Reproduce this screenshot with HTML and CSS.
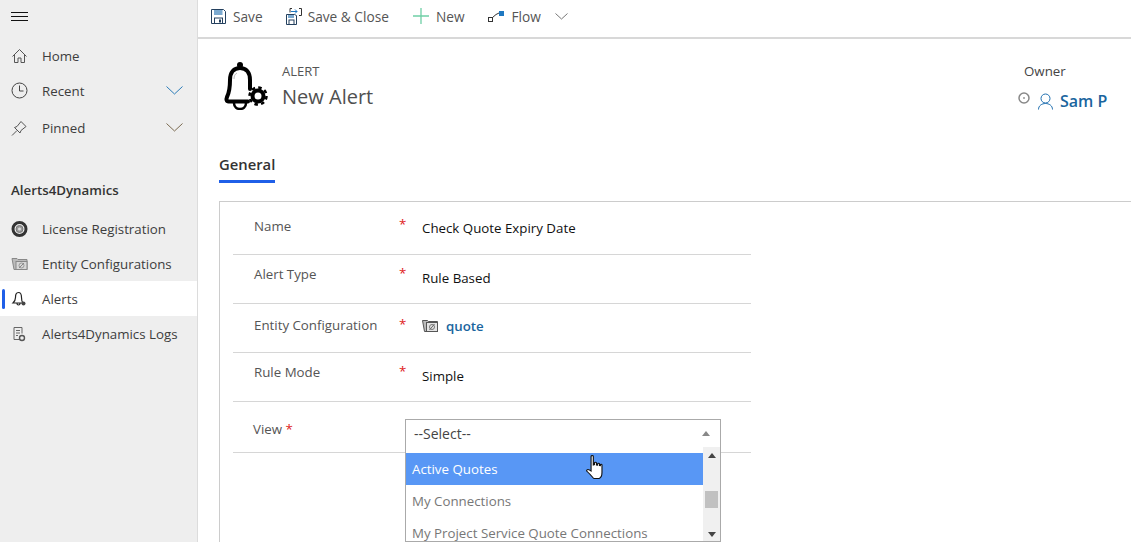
FILE: index.html
```html
<!DOCTYPE html>
<html lang="en">
<head>
    <meta charset="UTF-8">
    <meta name="viewport" content="width=device-width, initial-scale=1.0">
    <title>New Alert</title>
    <link rel="stylesheet" href="styles.css">
</head>
<body>
    <div class="app">
        <!-- Left navigation -->
        <nav class="sidebar">
            <div class="burger">
                <svg width="17" height="10" viewBox="0 0 17 10"><path d="M0 .5h17M0 4.500h17M0 8.500h17" stroke="#111" fill="none"/></svg>
            </div>
            <div class="nav-top">
                <div class="nav-row home-row">
                    <svg class="nav-icon" width="16" height="16" viewBox="0 0 16 16"><path d="M1 8.500 8 1.500l7 7M3 7v7.500h3.500V10h3v4.500H13V7" fill="none" stroke="#555" stroke-width="1"/></svg>
                    <span>Home</span>
                </div>
                <div class="nav-row recent-row">
                    <svg class="nav-icon" width="17" height="17" viewBox="0 0 17 17"><circle cx="8.500" cy="8.500" r="7.500" fill="none" stroke="#444" stroke-width="1"/><path d="M8.500 3.500v5.500H12.500" fill="none" stroke="#444" stroke-width="1"/></svg>
                    <span>Recent</span>
                    <svg class="nav-chevron" width="17" height="9" viewBox="0 0 17 9"><path d="M.5.500l8 7.500 8-7.500" fill="none" stroke="#2b7cb8" stroke-width="1"/></svg>
                </div>
                <div class="nav-row pinned-row">
                    <svg class="nav-icon" width="16" height="16" viewBox="0 0 16 16"><path d="M.5 15.500l5-5M3 7.500 5.500 6.500 9.500 1.500l5 5-5 4-1 2.500z" fill="none" stroke="#555" stroke-width="1"/></svg>
                    <span>Pinned</span>
                    <svg class="nav-chevron" width="17" height="9" viewBox="0 0 17 9"><path d="M.5.500l8 7.500 8-7.500" fill="none" stroke="#7a6a50" stroke-width="1"/></svg>
                </div>
            </div>
            <div class="nav-group">Alerts4Dynamics</div>
            <div class="nav-row">
                <svg class="nav-icon" width="16" height="16" viewBox="0 0 16 16"><circle cx="8" cy="8" r="6.500" fill="none" stroke="#333" stroke-width="3"/><circle cx="8" cy="8" r="3.500" fill="#999" stroke="#777" stroke-width="1"/><circle cx="8" cy="8" r="1.500" fill="#ddd"/></svg>
                <span>License Registration</span>
            </div>
            <div class="nav-row">
                <svg class="nav-icon" width="16" height="16" viewBox="0 0 16 16"><path d="M.5 2.500h5l1 1h9v10H2.500z" fill="#bbb" stroke="#888"/><rect x="4.500" y="5.500" width="11" height="8" fill="#d8d8d8" stroke="#888"/><circle cx="10" cy="9.500" r="2.500" fill="none" stroke="#999"/><path d="M7.500 12l5-5" stroke="#888"/></svg>
                <span>Entity Configurations</span>
            </div>
            <div class="nav-row active">
                <span class="active-bar"></span>
                <svg class="nav-icon" width="16" height="16" viewBox="0 0 16 16"><path d="M7 1.500C4.500 1.500 4 4 4 6.500c0 3-1 4-2.500 5.500h10C10 10.500 10 9 10 6.500 10 4 9.500 1.500 7 1.500zM5.500 12.500c0 2 3 2 3 0" fill="none" stroke="#222" stroke-width="1.200"/><circle cx="12" cy="12.500" r="2" fill="#444"/></svg>
                <span>Alerts</span>
            </div>
            <div class="nav-row">
                <svg class="nav-icon" width="16" height="16" viewBox="0 0 16 16"><path d="M8 13.500H2.500V1.500h8v6M4.500 4.500h4M4.500 7h4M4.500 9.500h2" fill="none" stroke="#666"/><circle cx="10.500" cy="12" r="2.500" fill="none" stroke="#555" stroke-width="1.400"/></svg>
                <span>Alerts4Dynamics Logs</span>
            </div>
        </nav>

        <main class="content">
            <!-- Command bar -->
            <div class="toolbar">
                <div class="tool tool-save">
                    <svg width="15" height="15" viewBox="0 0 15 15"><path d="M.5.500h12l2 2v12H.5z" fill="#fff" stroke="#24405e"/><rect x="3" y="1" width="8.500" height="5" fill="#7ba9cf"/><rect x="3.500" y="9" width="8" height="5.500" fill="#fff" stroke="#24405e"/><rect x="8" y="10.500" width="2" height="3" fill="#24405e"/></svg>
                    <span>Save</span>
                </div>
                <div class="tool tool-close">
                    <svg width="16" height="17" viewBox="0 0 16 17"><path d="M.5 6.500h8l2 1v9H.5z" fill="#fff" stroke="#24405e"/><rect x="2" y="7" width="6" height="3" fill="#7ba9cf"/><rect x="3" y="12" width="5" height="4.500" fill="#fff" stroke="#24405e"/><path d="M4 4.500V.5h2M13 .5h2.500v7H13" fill="none" stroke="#333"/><path d="M5 3.500h6M9 1.500l2 2-2 2" fill="none" stroke="#1f78c1"/></svg>
                    <span>Save &amp; Close</span>
                </div>
                <div class="tool tool-new">
                    <svg width="16" height="16" viewBox="0 0 16 16"><path d="M8 0v16M0 8h16" stroke="#6fcfa6" stroke-width="1.300" fill="none"/></svg>
                    <span>New</span>
                </div>
                <div class="tool tool-flow">
                    <svg width="16" height="11" viewBox="0 0 16 11"><rect x=".5" y="6.500" width="4" height="4" fill="#fff" stroke="#333"/><path d="M4.500 6.500 8 3.500 11 2" fill="none" stroke="#333"/><rect x="11" y="0" width="5" height="5" fill="#1f78c1"/></svg>
                    <span>Flow</span>
                </div>
                <svg class="tool-more" width="13" height="7" viewBox="0 0 13 7"><path d="M.5.500l6 5.500 6-5.500" fill="none" stroke="#777"/></svg>
            </div>

            <!-- Record header -->
            <header class="record-head">
                <svg class="record-icon" width="46" height="48" viewBox="0 0 46 48">
                    <circle cx="18" cy="3" r="3" fill="#000"/>
                    <path d="M28 27V18C28 10 24 6 18 6S8 10 8 18c0 9-.5 12-3 17-1 2.500-.5 4.500 1.500 4.500H26" fill="none" stroke="#000" stroke-width="4" stroke-linecap="round" stroke-linejoin="round"/>
                    <path d="M12 17c0-3 1-5 3-6" fill="none" stroke="#bbb" stroke-width="1"/>
                    <path d="M12 41c0 8 12 8 12 0" fill="none" stroke="#000" stroke-width="2.500"/>
                    <circle cx="36" cy="34" r="5.500" fill="#fff" stroke="#000" stroke-width="4"/>
                    <circle cx="36" cy="34" r="8.500" fill="none" stroke="#000" stroke-width="2.500" stroke-dasharray="3.500 3.170"/>
                </svg>
                <div class="record-title">
                    <div class="record-type">ALERT</div>
                    <div class="record-name">New Alert</div>
                </div>
                <div class="owner">
                    <div class="owner-label">Owner</div>
                    <div class="owner-value">
                        <svg class="owner-help" width="12" height="12" viewBox="0 0 12 12"><circle cx="6" cy="6" r="5" fill="none" stroke="#888" stroke-width="1.500"/><circle cx="6" cy="6" r="1" fill="#999"/></svg>
                        <svg class="owner-person" width="15" height="17" viewBox="0 0 15 17"><circle cx="7.500" cy="5.500" r="4.500" fill="none" stroke="#1f6fb0"/><path d="M.5 16.500c0-8 14-8 14 0" fill="none" stroke="#1f6fb0"/></svg>
                        <span>Sam P</span>
                    </div>
                </div>
            </header>

            <div class="tabs"><span class="tab">General</span></div>

            <!-- Form section -->
            <section class="form-box">
                <div class="form-col">
                    <div class="field field-name">
                        <span class="field-label">Name</span>
                        <span class="req">*</span>
                        <span class="field-value">Check Quote Expiry Date</span>
                    </div>
                    <div class="field field-type">
                        <span class="field-label">Alert Type</span>
                        <span class="req">*</span>
                        <span class="field-value">Rule Based</span>
                    </div>
                    <div class="field field-entity">
                        <span class="field-label">Entity Configuration</span>
                        <span class="req">*</span>
                        <span class="field-value field-link">
                            <svg width="16" height="14" viewBox="0 0 16 14"><path d="M.5 1.500h5l1 1h9v10H2.500z" fill="#bbb" stroke="#555"/><rect x="4.500" y="3.500" width="11" height="9" fill="#e4e4e4" stroke="#555"/><circle cx="10" cy="8" r="2.500" fill="none" stroke="#777"/><path d="M7.500 11l5-6" stroke="#666"/></svg>
                            quote
                        </span>
                    </div>
                    <div class="field field-mode">
                        <span class="field-label">Rule Mode</span>
                        <span class="req">*</span>
                        <span class="field-value">Simple</span>
                    </div>
                    <div class="field field-view">
                        <span class="view-label">View <span class="req-inline">*</span></span>
                        <div class="combo">
                            <div class="combo-box">
                                <span>--Select--</span>
                                <span class="arrow-up arrow-grey"></span>
                            </div>
                            <div class="combo-list">
                                <div class="combo-items">
                                    <div class="combo-item selected">Active Quotes</div>
                                    <div class="combo-item">My Connections</div>
                                    <div class="combo-item">My Project Service Quote Connections</div>
                                </div>
                                <div class="combo-scroll">
                                    <span class="arrow-up"></span>
                                    <span class="scroll-thumb"></span>
                                    <span class="arrow-down"></span>
                                </div>
                            </div>
                            <svg class="cursor" width="18" height="25" viewBox="0 0 16 25" preserveAspectRatio="none"><path d="M4.500 1.500c0-1.300 2-1.300 2 0V10l1-.3V8c0-1 1.800-1 1.800 0v2l1 .2V9c0-1 1.700-1 1.700 0v1.500l.8.200v-.7c0-1 1.400-1 1.400 0v7.500c0 3-1.500 5.500-2.500 6H7c-1-1-3-4-6-7-1-1 0-2.500 1.500-1.800L4.500 16z" fill="#fff" stroke="#111" stroke-width="1"/></svg>
                        </div>
                    </div>
                </div>
            </section>
        </main>
    </div>
</body>
</html>
```

FILE: styles.css
```css
html, body {
    margin: 0;
    padding: 0;
    height: 542px;
    overflow: hidden;
}
body {
    font-family: "Open Sans", "Noto Sans", Arial, sans-serif;
    font-size: 13.3px;
    color: #444;
    background: white;
}
.app {
    display: flex;
    height: 542px;
}

/* sidebar */
.sidebar {
    width: 197px;
    flex: none;
    background-color: #eeeeee;
    border-right: 1px solid #dcdcdc;
}
.burger {
    height: 34px;
    padding-left: 11px;
    display: flex;
    align-items: center;
}
.nav-top {
    padding-top: 4px;
}
.nav-row {
    position: relative;
    height: 35px;
    display: flex;
    align-items: center;
    padding-left: 11px;
    color: #3d3d3d;
}
.nav-icon {
    flex: none;
    margin-right: 14px;
    width: 17px;
}
.nav-chevron {
    margin-left: auto;
    margin-right: 14px;
}
.pinned-row {
    margin-top: 2px;
}
.nav-group {
    margin-top: 28px;
    height: 35px;
    padding-left: 11px;
    font-weight: 600;
    line-height: 35px;
    color: #333;
}
.nav-group + .nav-row {
    margin-top: 3px;
}
.active {
    background: white;
}
.active-bar {
    position: absolute;
    left: 2px;
    top: 8px;
    width: 3px;
    height: 20px;
    border-radius: 2px;
    background-color: #1f5fe8;
}

/* command bar */
.content {
    flex: 1;
    min-width: 0;
}
.toolbar {
    height: 32px;
    border-bottom: 2px solid #d8d8d8;
    display: flex;
    align-items: center;
    padding-left: 13px;
    padding-bottom: 5px;
    font-size: 13.7px;
    color: #555;
}
.tool {
    display: flex;
    align-items: center;
    gap: 7px;
}
.tool-save {
    margin-right: 23px;
}
.tool-close {
    gap: 6px;
    margin-right: 24px;
}
.tool-new {
    margin-right: 23px;
}
.tool-flow {
    gap: 8px;
    margin-right: 14px;
}

/* header */
.record-head {
    display: flex;
    height: 102px;
    padding-left: 24px;
}
.record-icon {
    margin-top: 23px;
    margin-right: 14px;
}
.record-title {
    padding-top: 23px;
}
.record-type {
    font-size: 13px;
    line-height: 18px;
    color: #555;
}
.record-name {
    font-size: 20px;
    line-height: 31px;
    padding-top: 1px;
    color: #505050;
}
.owner {
    margin-left: auto;
    padding-top: 23px;
    width: 107px;
}
.owner-label {
    line-height: 18px;
    color: #444;
}
.owner-value {
    display: flex;
    align-items: center;
    margin-top: 10px;
    margin-left: -6px;
    font-size: 16px;
    font-weight: 600;
    color: #1a659e;
}
.owner-help {
    margin-top: -7px;
    margin-right: 8px;
}
.owner-value span {
    margin-left: 7px;
}

/* tabs */
.tabs {
    height: 41px;
    padding-left: 21px;
}
.tab {
    display: inline-block;
    padding-top: 11px;
    height: 28px;
    line-height: 24px;
    font-size: 14.8px;
    font-weight: 600;
    color: #333;
    border-bottom: 3px solid #1f5fe8;
}

/* form */
.form-box {
    margin-left: 21px;
    margin-top: 19px;
    border: 1px solid #cccccc;
    border-right: none;
    border-bottom: none;
    height: 341px;
    padding-left: 13px;
}
.form-col {
    width: 518px;
}
.field {
    display: flex;
    align-items: flex-start;
    border-bottom: 1px solid #d6d6d6;
    box-sizing: border-box;
    height: 49px;
    padding-left: 21px;
}
.field-name {
    height: 53px;
}
.field-label {
    width: 145px;
    color: #555;
    line-height: 18px;
    padding-top: 11px;
}
.req {
    width: 23px;
    color: #e0201b;
    line-height: 18px;
    padding-top: 9px;
}
.field-value {
    color: #111;
    line-height: 18px;
    padding-top: 14px;
}
.field-name .field-label {
    padding-top: 15px;
}
.field-name .field-value {
    padding-top: 17px;
}
.field-name .req {
    padding-top: 13px;
}
.field-type .field-label {
    padding-top: 10px;
}
.field-entity .field-label {
    padding-top: 12px;
}
.field-entity .req {
    padding-top: 11px;
}
.field-mode .field-label {
    padding-top: 10px;
}
.field-link {
    display: flex;
    align-items: flex-start;
    gap: 8px;
    padding-top: 13px;
    color: #1a659e;
    font-weight: 600;
}
.field-link svg {
    margin-top: 2px;
}
.field-view {
    height: 51px;
    padding-left: 20px;
}
.view-label {
    width: 152px;
    padding-top: 18px;
    line-height: 18px;
    color: #555;
}
.req-inline {
    color: #e0201b;
}
.combo {
    position: relative;
    width: 316px;
    margin-top: 17px;
}
.combo-box {
    box-sizing: border-box;
    height: 29px;
    border: 1px solid #aaaaaa;
    background: white;
    display: flex;
    align-items: center;
    justify-content: space-between;
    padding: 0 10px 0 8px;
    font-size: 14px;
    color: #444;
}
.arrow-up {
    width: 0;
    height: 0;
    border-left: 4px solid transparent;
    border-right: 4px solid transparent;
    border-bottom: 5px solid #444;
}
.arrow-grey {
    border-bottom-color: #888;
}
.arrow-down {
    width: 0;
    height: 0;
    border-left: 4px solid transparent;
    border-right: 4px solid transparent;
    border-top: 5px solid #444;
}
.combo-list {
    position: absolute;
    left: 0;
    top: 28px;
    box-sizing: border-box;
    width: 316px;
    height: 95px;
    display: flex;
    background: white;
    border: 1px solid #aaaaaa;
    border-top: none;
    overflow: hidden;
}
.combo-items {
    flex: 1;
    padding-top: 6px;
}
.combo-item {
    height: 32px;
    line-height: 32px;
    padding-left: 6px;
    color: #777;
    white-space: nowrap;
}
.selected {
    background-color: #5897f5;
    color: white;
}
.combo-scroll {
    width: 17px;
    background-color: #f0f0f0;
    display: flex;
    flex-direction: column;
    align-items: center;
    padding-top: 6px;
}
.scroll-thumb {
    width: 13px;
    height: 17px;
    margin-top: 33px;
    background-color: #c1c1c1;
}
.combo-scroll .arrow-down {
    margin-top: auto;
    margin-bottom: 4px;
}
.cursor {
    position: absolute;
    left: 181px;
    top: 36px;
}
```
